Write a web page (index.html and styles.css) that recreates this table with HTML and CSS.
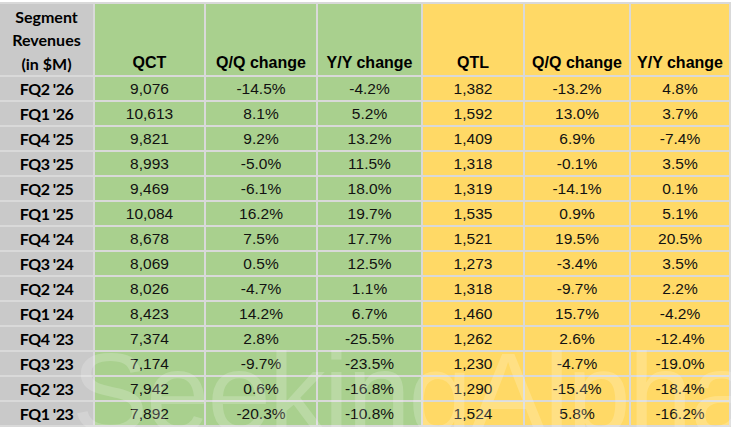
FILE: index.html
```html
<!DOCTYPE html>
<html lang="en">
<head>
<meta charset="utf-8">
<title>Segment Revenues</title>
<link rel="stylesheet" href="styles.css">
</head>
<body>
<div class="sheet">
<table class="rev">
  <colgroup>
    <col class="c1"><col class="c2"><col class="c3"><col class="c4"><col class="c5"><col class="c6"><col class="c7">
  </colgroup>
  <thead>
    <tr>
      <th class="lbl">Segment<br>Revenues<br>(in $M)</th>
      <th class="g">QCT</th><th class="g">Q/Q change</th><th class="g">Y/Y change</th>
      <th class="y">QTL</th><th class="y">Q/Q change</th><th class="y">Y/Y change</th>
    </tr>
  </thead>
  <tbody>
    <tr><th class="lbl">FQ2 '26</th><td class="g">9,076</td><td class="g">-14.5%</td><td class="g">-4.2%</td><td class="y">1,382</td><td class="y">-13.2%</td><td class="y">4.8%</td></tr>
    <tr><th class="lbl">FQ1 '26</th><td class="g">10,613</td><td class="g">8.1%</td><td class="g">5.2%</td><td class="y">1,592</td><td class="y">13.0%</td><td class="y">3.7%</td></tr>
    <tr><th class="lbl">FQ4 '25</th><td class="g">9,821</td><td class="g">9.2%</td><td class="g">13.2%</td><td class="y">1,409</td><td class="y">6.9%</td><td class="y">-7.4%</td></tr>
    <tr><th class="lbl">FQ3 '25</th><td class="g">8,993</td><td class="g">-5.0%</td><td class="g">11.5%</td><td class="y">1,318</td><td class="y">-0.1%</td><td class="y">3.5%</td></tr>
    <tr><th class="lbl">FQ2 '25</th><td class="g">9,469</td><td class="g">-6.1%</td><td class="g">18.0%</td><td class="y">1,319</td><td class="y">-14.1%</td><td class="y">0.1%</td></tr>
    <tr><th class="lbl">FQ1 '25</th><td class="g">10,084</td><td class="g">16.2%</td><td class="g">19.7%</td><td class="y">1,535</td><td class="y">0.9%</td><td class="y">5.1%</td></tr>
    <tr><th class="lbl">FQ4 '24</th><td class="g">8,678</td><td class="g">7.5%</td><td class="g">17.7%</td><td class="y">1,521</td><td class="y">19.5%</td><td class="y">20.5%</td></tr>
    <tr><th class="lbl">FQ3 '24</th><td class="g">8,069</td><td class="g">0.5%</td><td class="g">12.5%</td><td class="y">1,273</td><td class="y">-3.4%</td><td class="y">3.5%</td></tr>
    <tr><th class="lbl">FQ2 '24</th><td class="g">8,026</td><td class="g">-4.7%</td><td class="g">1.1%</td><td class="y">1,318</td><td class="y">-9.7%</td><td class="y">2.2%</td></tr>
    <tr><th class="lbl">FQ1 '24</th><td class="g">8,423</td><td class="g">14.2%</td><td class="g">6.7%</td><td class="y">1,460</td><td class="y">15.7%</td><td class="y">-4.2%</td></tr>
    <tr><th class="lbl">FQ4 '23</th><td class="g">7,374</td><td class="g">2.8%</td><td class="g">-25.5%</td><td class="y">1,262</td><td class="y">2.6%</td><td class="y">-12.4%</td></tr>
    <tr><th class="lbl">FQ3 '23</th><td class="g">7,174</td><td class="g">-9.7%</td><td class="g">-23.5%</td><td class="y">1,230</td><td class="y">-4.7%</td><td class="y">-19.0%</td></tr>
    <tr><th class="lbl">FQ2 '23</th><td class="g">7,942</td><td class="g">0.6%</td><td class="g">-16.8%</td><td class="y">1,290</td><td class="y">-15.4%</td><td class="y">-18.4%</td></tr>
    <tr><th class="lbl">FQ1 '23</th><td class="g">7,892</td><td class="g">-20.3%</td><td class="g">-10.8%</td><td class="y">1,524</td><td class="y">5.8%</td><td class="y">-16.2%</td></tr>
  </tbody>
</table>
<span class="watermark" aria-hidden="true">SeekingAlpha</span>
</div>
</body>
</html>
```

FILE: styles.css
```css
html, body {
  margin: 0;
  padding: 0;
  background: #ffffff;
}
body {
  padding-top: 2px;
}
.sheet {
  position: relative;
  width: 731px;
  height: 425px;
  overflow: hidden;
}
.rev {
  table-layout: fixed;
  width: 731px;
  border-collapse: separate;
  border-spacing: 2px;
  background: #d9d9d9;
  margin-left: -2px;
  font-family: "Liberation Sans", Arial, sans-serif;
  color: #000;
}
.c1 { width: 93px; }
.c2 { width: 109px; }
.c3 { width: 110px; }
.c4 { width: 103px; }
.c5 { width: 100px; }
.c6 { width: 104px; }
.c7 { width: 98px; }

.rev th, .rev td {
  padding: 0;
  text-align: center;
  vertical-align: middle;
  white-space: nowrap;
}
.rev thead th {
  height: 71px;
  vertical-align: bottom;
  font-size: 16px;
  font-weight: bold;
  line-height: 20px;
  padding-bottom: 2px;
  box-sizing: border-box;
}
.rev tbody td {
  height: 23px;
  font-size: 15.5px;
  line-height: 17px;
  font-weight: normal;
  color: #111;
}
.rev .lbl {
  background: #c9c9c9;
  font-family: Lato, "Open Sans", sans-serif;
  font-weight: bold;
  font-size: 16px;
}
.rev thead th.lbl {
  line-height: 23.5px;
  padding-bottom: 0;
}
.rev tbody th.lbl {
  height: 23px;
  line-height: 17px;
  letter-spacing: -0.5px;
}
.rev .g { background: #a9d08e; }
.rev .y { background: #ffd966; }

.watermark {
  position: absolute;
  left: 72px;
  top: 334px;
  font-family: "Liberation Sans", Arial, sans-serif;
  font-size: 114px;
  line-height: 1;
  color: rgba(255, 255, 255, 0.2);
  pointer-events: none;
  white-space: nowrap;
  letter-spacing: -2px;
}
```
